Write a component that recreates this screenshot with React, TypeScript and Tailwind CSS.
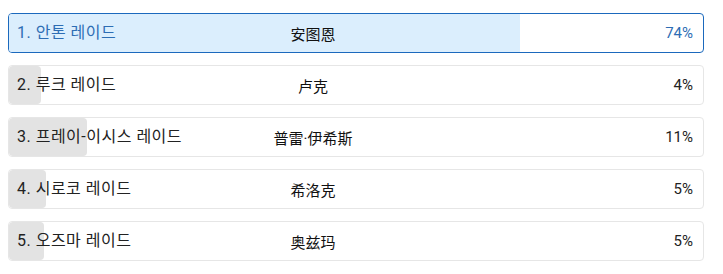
const rows = [
  { label: '1. 안톤 레이드', cn: '安图恩', pct: 74, fill: 73.7, active: true },
  { label: '2. 루크 레이드', cn: '卢克', pct: 4, fill: 4.6 },
  { label: '3. 프레이-이시스 레이드', cn: '普雷·伊希斯', pct: 11, fill: 11.3 },
  { label: '4. 시로코 레이드', cn: '希洛克', pct: 5, fill: 5.3 },
  { label: '5. 오즈마 레이드', cn: '奥兹玛', pct: 5, fill: 5.0 },
];

export default function App() {
  return (
    <div className="w-[723px] h-[274px] bg-white pt-[13px] pl-2" style={{ fontFamily: 'Roboto, "Noto Sans CJK KR", sans-serif' }}>
      <div className="w-[696px] flex flex-col gap-[12px]">
        {rows.map(r => (
          <div
            key={r.label}
            className={
              'relative h-[40px] rounded-[4px] border overflow-hidden ' +
              (r.active ? 'border-[#1b69bd]' : 'border-[#e6e6e6]')
            }
          >
            <div
              className={'absolute left-0 top-0 bottom-0 ' + (r.active ? 'bg-[#dbeefd]' : 'bg-[#e3e3e3] rounded-[4px]')}
              style={{ width: `${r.fill}%` }}
            />
            <div className="relative h-full grid grid-cols-[236px_120px_1fr] items-center pl-[8px] pr-[10px] text-[15px]">
              <span className={'text-[16px] tracking-[0.5px] ' + (r.active ? 'text-[#2d6db4]' : 'text-[#222]')}>{r.label}</span>
              <span className="text-center text-[15px] text-[#111] translate-y-[2px]" style={{ fontFamily: 'Roboto, "Noto Sans CJK SC", sans-serif' }}>{r.cn}</span>
              <span className={'text-right ' + (r.active ? 'text-[#2d6db4]' : 'text-[#222]')}>{r.pct}%</span>
            </div>
          </div>
        ))}
      </div>
    </div>
  );
}
